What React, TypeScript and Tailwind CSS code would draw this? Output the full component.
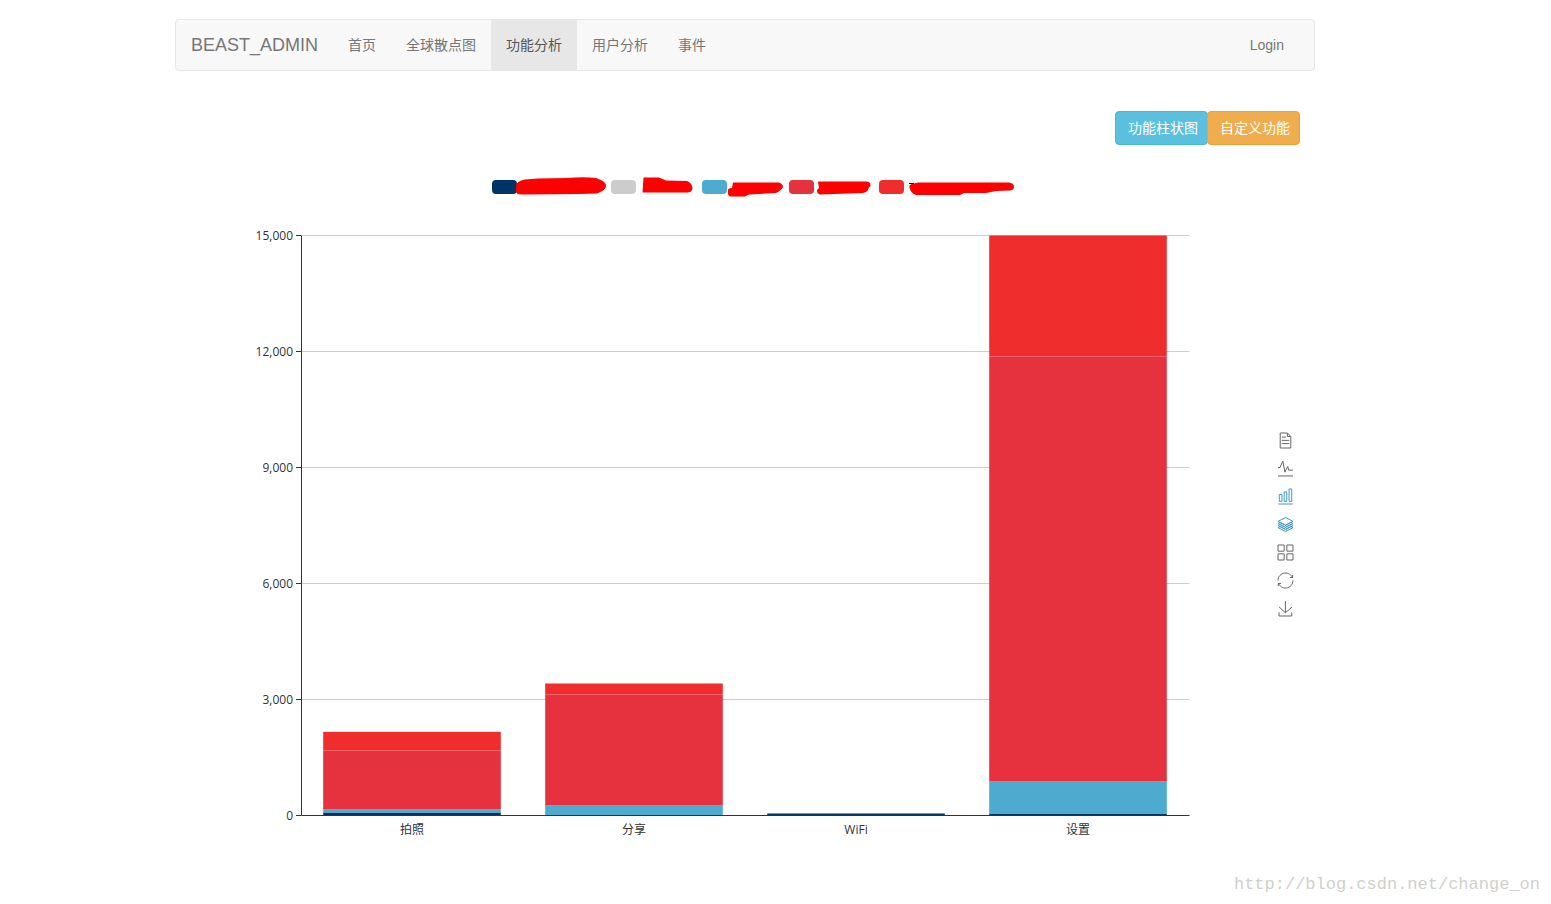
import React, { useState } from 'react';
import clsx from 'clsx';

const NAV_ITEMS = ['首页', '全球散点图', '功能分析', '用户分析', '事件'];

const COLORS = ['#003366', '#4dabcf', '#e5323e', '#ef2d2d'];

// stacked bottom to top, same order as COLORS
const BARS = [
  { name: '拍照', values: [78, 78, 1526, 481] },
  { name: '分享', values: [0, 259, 2871, 284] },
  { name: 'WiFi', values: [52, 0, 0, 0] },
  { name: '设置', values: [52, 828, 10991, 3129] },
];

const TICKS = [0, 3000, 6000, 9000, 12000, 15000];

const LEGEND = [
  {
    id: 'series-1',
    swatch: 'bg-[#003366]',
    width: 94,
    mark: 'M-1 10Q-1 5 8 3.5L21 2.5L51 2L58 1.5Q70 1 79 2Q89 5 89 10Q89 14 80 17.5L63 18L6 18.5Q-1 19 -1 15Z',
  },
  {
    id: 'series-2',
    swatch: 'bg-[#cccccc]',
    width: 66,
    mark: 'M6.5 16.5L7.5 1.5H23L30 4.5L51 5Q56 7 56.5 12Q56 16.5 51 16.5Z',
  },
  {
    id: 'series-3',
    swatch: 'bg-[#4dabcf]',
    width: 62,
    mark: 'M1 14Q1 12 5 12L6 6.5H52Q56 8 56 11Q55 14 49 17L22 18.5L18 20.5H4Q0 20 1 14Z',
  },
  {
    id: 'series-4',
    swatch: 'bg-[#e5323e]',
    width: 65,
    mark: 'M3 14L5 12L4 5.5H53Q57 6 56.5 10Q54 12 54 14Q52 17 48 17L34 17.5L6 18.5Q3 18 3 14Z',
  },
  {
    id: 'series-5',
    swatch: 'bg-[#ef2d2d]',
    width: 110,
    mark: 'M6 13Q4 9 8 8L14 6.5H105Q110 7 110 11Q110 14 106 14.5L92 15L82 17H60L56 19H12Q7 17 6 13Z',
  },
];

const TOOLS = [
  {
    title: '数据视图',
    viewBox: '11.5 2 39.5 56',
    d: 'M17.5,17.3H33 M45.4,29.5h-28 M11.5,2v56H51V14.8L38.4,2H11.5z M38.4,2.2v12.7H51 M45.4,41.7h-28',
  },
  {
    title: '切换为折线图',
    viewBox: '4.1 6.9 51.4 51.1',
    d: 'M4.1,28.9h7.1l9.3-22l7.4,38l9.7-19.7l3,12.8h14.9M4.1,58h51.4',
  },
  {
    title: '切换为柱状图',
    active: true,
    viewBox: '3.1 2 53.7 56',
    d: 'M6.7,22.9h10V48h-10V22.9zM24.9,13h10v35h-10V13zM43.2,2h10v46h-10V2zM3.1,58h53.7',
  },
  {
    title: '切换为堆叠',
    active: true,
    viewBox: '-0.2 2.2 60.2 55.6',
    d: 'M8.2,38.4l-8.4,4.1l30.6,15.3L60,42.5l-8.1-4.1l-21.5,11L8.2,38.4z M51.9,30l-8.1,4.2l-13.4,6.9l-13.9-6.9L8.2,30l-8.4,4.2l8.4,4.2l22.2,11l21.5-11l8.1-4.2L51.9,30z M51.9,21.7l-8.1,4.2L35.7,30l-5.3,2.8L24.9,30l-8.4-4.1l-8.3-4.2l-8.4,4.2L8.2,30l8.3,4.2l13.9,6.9l13.4-6.9l8.1-4.2l8.1-4.1L51.9,21.7z M30.4,2.2L-0.2,17.5l8.4,4.1l8.3,4.2l8.4,4.2l5.5,2.7l5.3-2.7l8.1-4.2l8.1-4.2l8.1-4.1L30.4,2.2z',
  },
  {
    title: '切换为平铺',
    viewBox: '2.3 2.2 55.5 55.6',
    d: 'M2.3,2.2h22.8V25H2.3V2.2z M35,2.2h22.8V25H35V2.2z M2.3,35h22.8v22.8H2.3V35z M35,35h22.8v22.8H35V35z',
  },
  {
    title: '还原',
    viewBox: '2 2 56 56',
    d: 'M47,18.9h9.8V8.7 M56.3,20.1C52.1,9,40.5,0.6,26.8,2.1C12.6,3.7,1.6,16.2,2.1,30.6 M13,41.1H3.1v10.2 M3.7,39.9c4.2,11.1,15.8,19.5,29.5,18c14.2-1.6,25.2-14.1,24.7-28.5',
  },
  {
    title: '保存为图片',
    viewBox: '4.6 0 50.1 58',
    d: 'M4.7,22.9L29.3,45.5L54.7,23.4M4.6,43.6L4.6,58L53.8,58L53.8,43.6M29.2,45.1L29.2,0',
  },
];

// plot area inside the chart's viewBox
const LEFT = 111;
const RIGHT = 999;
const TOP = 10.5;
const BOTTOM = 590.5;
const MAX = 15000;
const BAND = (RIGHT - LEFT) / BARS.length;

const yOf = (value: number) => BOTTOM - (value / MAX) * (BOTTOM - TOP);

function Navbar() {
  const [current, setCurrent] = useState('功能分析');

  return (
    <nav className="flex items-center rounded border border-[#e7e7e7] bg-[#f8f8f8] text-sm leading-5 text-[#777]">
      <a href="#" className="px-[15px] text-lg leading-5">BEAST_ADMIN</a>
      <ul className="flex">
        {NAV_ITEMS.map(item => (
          <li key={item}>
            <a
              href="#"
              onClick={() => setCurrent(item)}
              className={clsx('block p-[15px]', item === current && 'bg-[#e7e7e7] text-[#555]')}
            >
              {item}
            </a>
          </li>
        ))}
      </ul>
      <a href="#" className="mr-[15px] ml-auto p-[15px]">Login</a>
    </nav>
  );
}

function Legend() {
  return (
    <ul className="mt-[31px] flex justify-center pl-4">
      {LEGEND.map(item => (
        <li key={item.id}>
          <button type="button" aria-label={item.id} className="flex items-center">
            <span className={clsx('h-[14px] w-[25px] rounded', item.swatch)} />
            <svg width={item.width} height={22} viewBox={`0 0 ${item.width} 22`} className="overflow-visible">
              {item.id === 'series-5' && <path d="M5 7.5H10M8 7V10" stroke="#000" />}
              <path d={item.mark} fill="#ff0000" />
            </svg>
          </button>
        </li>
      ))}
    </ul>
  );
}

function StackedChart() {
  return (
    <svg
      viewBox="0 0 1087 620"
      role="img"
      aria-label="功能柱状图"
      className="min-w-0 flex-1 font-['Open_Sans','Noto_Sans_CJK_SC',sans-serif] text-xs"
    >
      {TICKS.map(tick => (
        <g key={tick}>
          <line x1={LEFT} x2={RIGHT + 0.5} y1={yOf(tick)} y2={yOf(tick)} stroke="#ccc" />
          <line x1={LEFT - 5} x2={LEFT} y1={yOf(tick)} y2={yOf(tick)} stroke="#333" />
          <text x={103} y={yOf(tick) + 4} textAnchor="end" fill="#333">{tick.toLocaleString('en-US')}</text>
        </g>
      ))}

      {BARS.map((bar, i) => {
        let sum = 0;
        return (
          <g key={bar.name}>
            {bar.values.map((value, s) => {
              sum += value;
              return (
                <rect
                  key={s}
                  x={LEFT + BAND * (i + 0.1)}
                  y={yOf(sum)}
                  width={BAND * 0.8}
                  height={yOf(sum - value) - yOf(sum)}
                  fill={COLORS[s]}
                />
              );
            })}
            <text x={LEFT + BAND * (i + 0.5)} y={609} textAnchor="middle" fill="#333">{bar.name}</text>
          </g>
        );
      })}

      <path d={`M${LEFT + 0.5} ${TOP}V${BOTTOM}H${RIGHT + 0.5}`} fill="none" stroke="#333" />
    </svg>
  );
}

function Toolbox() {
  return (
    <div className="mt-52 mr-[7px] flex flex-col gap-[13px]">
      {TOOLS.map(tool => (
        <button key={tool.title} type="button" aria-label={tool.title} className="h-[15px] w-4">
          <svg
            viewBox={tool.viewBox}
            className={clsx('mx-auto h-[15px] w-[15px] overflow-visible', tool.active ? 'text-[#3e98c5]' : 'text-[#666]')}
          >
            <path d={tool.d} fill="none" stroke="currentColor" vectorEffect="non-scaling-stroke" />
          </svg>
        </button>
      ))}
    </div>
  );
}

export default function App() {
  return (
    <div className="bg-white pt-[19px] pb-2 font-['Liberation_Sans','Noto_Sans_CJK_SC',sans-serif] text-[#333]">
      <div className="pr-[61px]">
        <div className="mx-auto max-w-[1140px]">
          <Navbar />
          <main className="px-[15px]">
            <div className="mt-10 flex justify-end text-sm leading-5 text-white">
              <button type="button" className="rounded border border-[#46b8da] bg-[#5bc0de] py-1.5 pr-[9px] pl-3">
                功能柱状图
              </button>
              <button type="button" className="-ml-px rounded border border-[#eea236] bg-[#f0ad4e] py-1.5 pr-[9px] pl-3">
                自定义功能
              </button>
            </div>
            <Legend />
            <div className="mt-[27px] flex items-start">
              <StackedChart />
              <Toolbox />
            </div>
          </main>
        </div>
      </div>
      <footer className="mt-[30px] pr-[11px] text-right font-['Liberation_Mono',monospace] text-[17px] leading-5 text-[#d0d0ca]">
        http://blog.csdn.net/change_on
      </footer>
    </div>
  );
}
